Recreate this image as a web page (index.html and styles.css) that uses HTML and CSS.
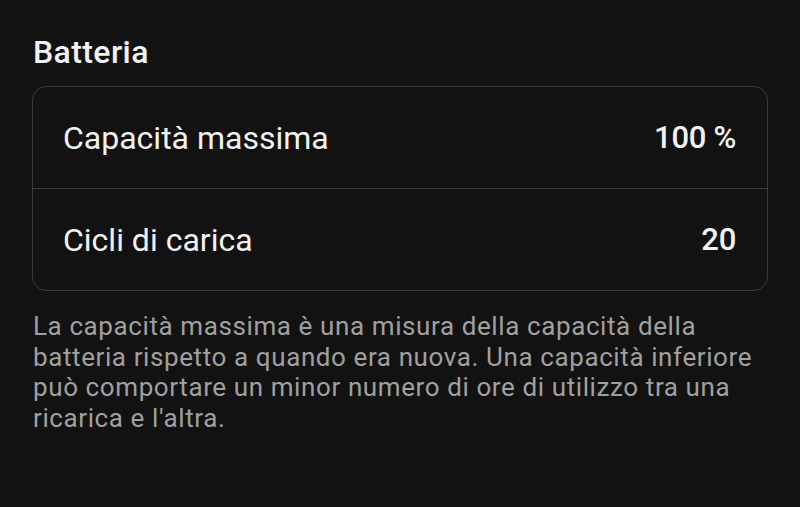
FILE: index.html
```html
<!DOCTYPE html>
<html lang="it">
<head>
<meta charset="utf-8">
<link rel="stylesheet" href="styles.css">
</head>
<body>
<section class="section">
  <h2 class="title">Batteria</h2>
  <div class="card">
    <div class="row">
      <span class="label">Capacità massima</span>
      <span class="value">100 %</span>
    </div>
    <div class="row">
      <span class="label">Cicli di carica</span>
      <span class="value">20</span>
    </div>
  </div>
  <p class="note">La capacità massima è una misura della capacità della batteria rispetto a quando era nuova. Una capacità inferiore può comportare un minor numero di ore di utilizzo tra una ricarica e l'altra.</p>
</section>
</body>
</html>
```
FILE: styles.css
```css
html, body {
  margin: 0;
  padding: 0;
  background: #121212;
}
body {
  font-family: Roboto, "Liberation Sans", sans-serif;
  color: #f2f2f2;
}
.section {
  padding: 32px 32px 0 32px;
}
.title {
  margin: 0 0 0 1px;
  font-size: 32px;
  font-weight: 500;
  letter-spacing: 0.4px;
  line-height: 40px;
}
.card {
  margin-top: 14px;
  border: 1px solid #3b3b3b;
  border-radius: 14px;
}
.row {
  display: flex;
  justify-content: space-between;
  align-items: center;
  height: 101px;
  padding: 0 31px 0 30px;
}
.row + .row {
  border-top: 1px solid #3b3b3b;
}
.label {
  font-size: 32px;
  font-weight: 400;
  letter-spacing: 0;
}
.value {
  font-size: 31px;
  font-weight: 500;
  letter-spacing: -0.3px;
}
.note {
  margin: 20px 0 0 1px;
  font-size: 26px;
  line-height: 30.5px;
  letter-spacing: 0.6px;
  color: #a0a0a0;
}
```
